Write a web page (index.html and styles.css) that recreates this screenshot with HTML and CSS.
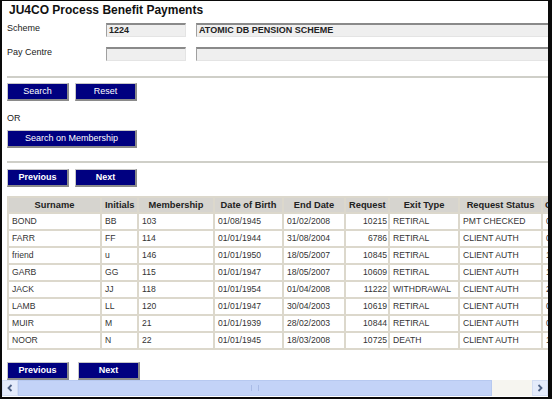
FILE: index.html
```html
<!DOCTYPE html>
<html>
<head>
<meta charset="utf-8">
<link rel="stylesheet" href="styles.css">
</head>
<body>
<div class="frame">
  <div class="viewport">
    <div class="page">
      <h1 class="title">JU4CO Process Benefit Payments</h1>
      <div class="form">
        <div class="label">Scheme</div>
        <div class="field short">1224</div>
        <div class="field long">ATOMIC DB PENSION SCHEME</div>
        <div class="label">Pay Centre</div>
        <div class="field short"></div>
        <div class="field long"></div>
      </div>
      <div class="rule"></div>
      <div class="btnrow">
        <button class="btn">Search</button>
        <button class="btn">Reset</button>
      </div>
      <div class="or">OR</div>
      <div class="btnrow">
        <button class="btn wide">Search on Membership</button>
      </div>
      <div class="rule rule2"></div>
      <div class="btnrow pager">
        <button class="btn bold">Previous</button>
        <button class="btn bold">Next</button>
      </div>
      <table class="grid">
        <colgroup>
          <col style="width:93px"><col style="width:37px"><col style="width:76px"><col style="width:69px"><col style="width:62px"><col style="width:44px"><col style="width:70px"><col style="width:83px"><col style="width:70px">
        </colgroup>
        <thead>
          <tr><th>Surname</th><th>Initials</th><th>Membership</th><th>Date of Birth</th><th>End Date</th><th>Request</th><th>Exit Type</th><th>Request Status</th><th class="first">Created</th></tr>
        </thead>
        <tbody>
          <tr><td>BOND</td><td>BB</td><td>103</td><td>01/08/1945</td><td>01/02/2008</td><td class="num">10215</td><td>RETIRAL</td><td>PMT CHECKED</td><td>05/02/2008</td></tr>
          <tr><td>FARR</td><td>FF</td><td>114</td><td>01/01/1944</td><td>31/08/2004</td><td class="num">6786</td><td>RETIRAL</td><td>CLIENT AUTH</td><td>09/08/2004</td></tr>
          <tr><td>friend</td><td>u</td><td>146</td><td>01/01/1950</td><td>18/05/2007</td><td class="num">10845</td><td>RETIRAL</td><td>CLIENT AUTH</td><td>18/05/2007</td></tr>
          <tr><td>GARB</td><td>GG</td><td>115</td><td>01/01/1947</td><td>18/05/2007</td><td class="num">10609</td><td>RETIRAL</td><td>CLIENT AUTH</td><td>18/05/2007</td></tr>
          <tr><td>JACK</td><td>JJ</td><td>118</td><td>01/01/1954</td><td>01/04/2008</td><td class="num">11222</td><td>WITHDRAWAL</td><td>CLIENT AUTH</td><td>26/03/2008</td></tr>
          <tr><td>LAMB</td><td>LL</td><td>120</td><td>01/01/1947</td><td>30/04/2003</td><td class="num">10619</td><td>RETIRAL</td><td>CLIENT AUTH</td><td>05/04/2003</td></tr>
          <tr><td>MUIR</td><td>M</td><td>21</td><td>01/01/1939</td><td>28/02/2003</td><td class="num">10844</td><td>RETIRAL</td><td>CLIENT AUTH</td><td>03/02/2003</td></tr>
          <tr><td>NOOR</td><td>N</td><td>22</td><td>01/01/1945</td><td>18/03/2008</td><td class="num">10725</td><td>DEATH</td><td>CLIENT AUTH</td><td>10/03/2008</td></tr>
        </tbody>
      </table>
      <div class="btnrow pager2">
        <button class="btn bold">Previous</button>
        <button class="btn bold">Next</button>
      </div>
    </div>
  </div>
  <div class="hscroll">
    <div class="sbtn"><svg width="8" height="8" viewBox="0 0 8 8"><path d="M5.5 1 L2.5 4 L5.5 7" fill="none" stroke="#4d6185" stroke-width="1.8"/></svg></div>
    <div class="thumb"><span class="grip"></span></div>
    <div class="track"></div>
    <div class="sbtn"><svg width="8" height="8" viewBox="0 0 8 8"><path d="M2.5 1 L5.5 4 L2.5 7" fill="none" stroke="#4d6185" stroke-width="1.8"/></svg></div>
  </div>
</div>
</body>
</html>
```
FILE: styles.css
```css
html, body {
  margin: 0;
  padding: 0;
  background: #fff;
}
.frame {
  width: 552px;
  height: 399px;
  box-sizing: border-box;
  border-style: solid;
  border-color: #0a0a0a;
  border-width: 1px 4px 2px 2px;
  display: flex;
  flex-direction: column;
  overflow: hidden;
  padding-bottom: 1px;
  font-family: "Liberation Sans", Arial, sans-serif;
  font-size: 9px;
  color: #333;
}
.viewport {
  flex: 1;
  overflow: hidden;
  position: relative;
}
.page {
  padding: 0 0 0 5px;
  width: 700px;
}
.title {
  margin: 0;
  padding: 2px 0 0 2px;
  font-size: 12px;
  font-weight: bold;
  color: #111;
  line-height: 14px;
  height: 17px;
  box-sizing: border-box;
}
.form {
  display: grid;
  grid-template-columns: 89px 80px 360px;
  column-gap: 10px;
  row-gap: 10px;
  margin-top: 5px;
  align-items: center;
}
.label {
  font-size: 9px;
  color: #222;
  position: relative;
  top: -2px;
}
.field {
  height: 14px;
  box-sizing: border-box;
  background: #efefef;
  border-top: 2px solid #8a8a8a;
  border-left: 1px solid #a0a0a0;
  border-right: 1px solid #e4e4e4;
  border-bottom: 1px solid #e4e4e4;
  font-weight: bold;
  font-size: 9px;
  line-height: 11px;
  padding-left: 2px;
  color: #222;
}
.long {
  width: 360px;
}
.rule {
  height: 2px;
  background: #cfcfc8;
  margin-top: 15px;
  width: 560px;
}
.btnrow {
  display: flex;
  gap: 6px;
  margin-top: 5px;
}
.btn {
  width: 62px;
  height: 18px;
  box-sizing: border-box;
  background: #000080;
  color: #fff;
  font-family: "Liberation Sans", Arial, sans-serif;
  font-size: 9px;
  padding: 0;
  margin: 0;
  border-style: solid;
  border-width: 1px 2px 2px 1px;
  border-color: #c6c6c6 #8a8a8a #8a8a8a #c6c6c6;
  line-height: 13px;
}
.bold {
  font-weight: bold;
}
.wide {
  width: 130px;
}
.or {
  margin-top: 10px;
  height: 14px;
  line-height: 14px;
  color: #222;
}
.rule2 {
  margin-top: 13px;
}
.pager {
  margin-top: 6px;
}
.grid {
  margin-top: 9px;
  border-collapse: collapse;
  table-layout: fixed;
  width: 604px;
}
.grid th, .grid td {
  border: 2px solid #dcd8cc;
  padding: 1px 3px;
  white-space: nowrap;
  overflow: hidden;
}
.grid th {
  background: #d6d4cf;
  color: #222;
  line-height: 12px;
  font-size: 9.3px;
  font-weight: bold;
  text-align: center;
}
.grid th.first {
  text-align: left;
  padding-left: 2px;
}
.grid td {
  line-height: 13px;
  font-size: 8.6px;
  color: #333;
}
.grid td.num {
  text-align: right;
  padding-right: 1px;
}
.pager2 {
  margin-top: 12px;
  gap: 9px;
}
.hscroll {
  height: 16px;
  display: flex;
  flex: none;
}
.sbtn {
  width: 16px;
  height: 16px;
  background: #e4ebfb;
  display: flex;
  align-items: center;
  justify-content: center;
  box-sizing: border-box;
  border: 1px solid #d3ddf3;
}
.thumb {
  width: 474px;
  background: #c3d3f7;
  border: 1px solid #b7c9f0;
  box-sizing: border-box;
  display: flex;
  align-items: center;
  justify-content: center;
}
.grip {
  width: 6px;
  height: 6px;
  border-left: 1px solid #a9bbe6;
  border-right: 1px solid #a9bbe6;
  position: relative;
}
.track {
  flex: 1;
  background: #f6f5f0;
}
```
